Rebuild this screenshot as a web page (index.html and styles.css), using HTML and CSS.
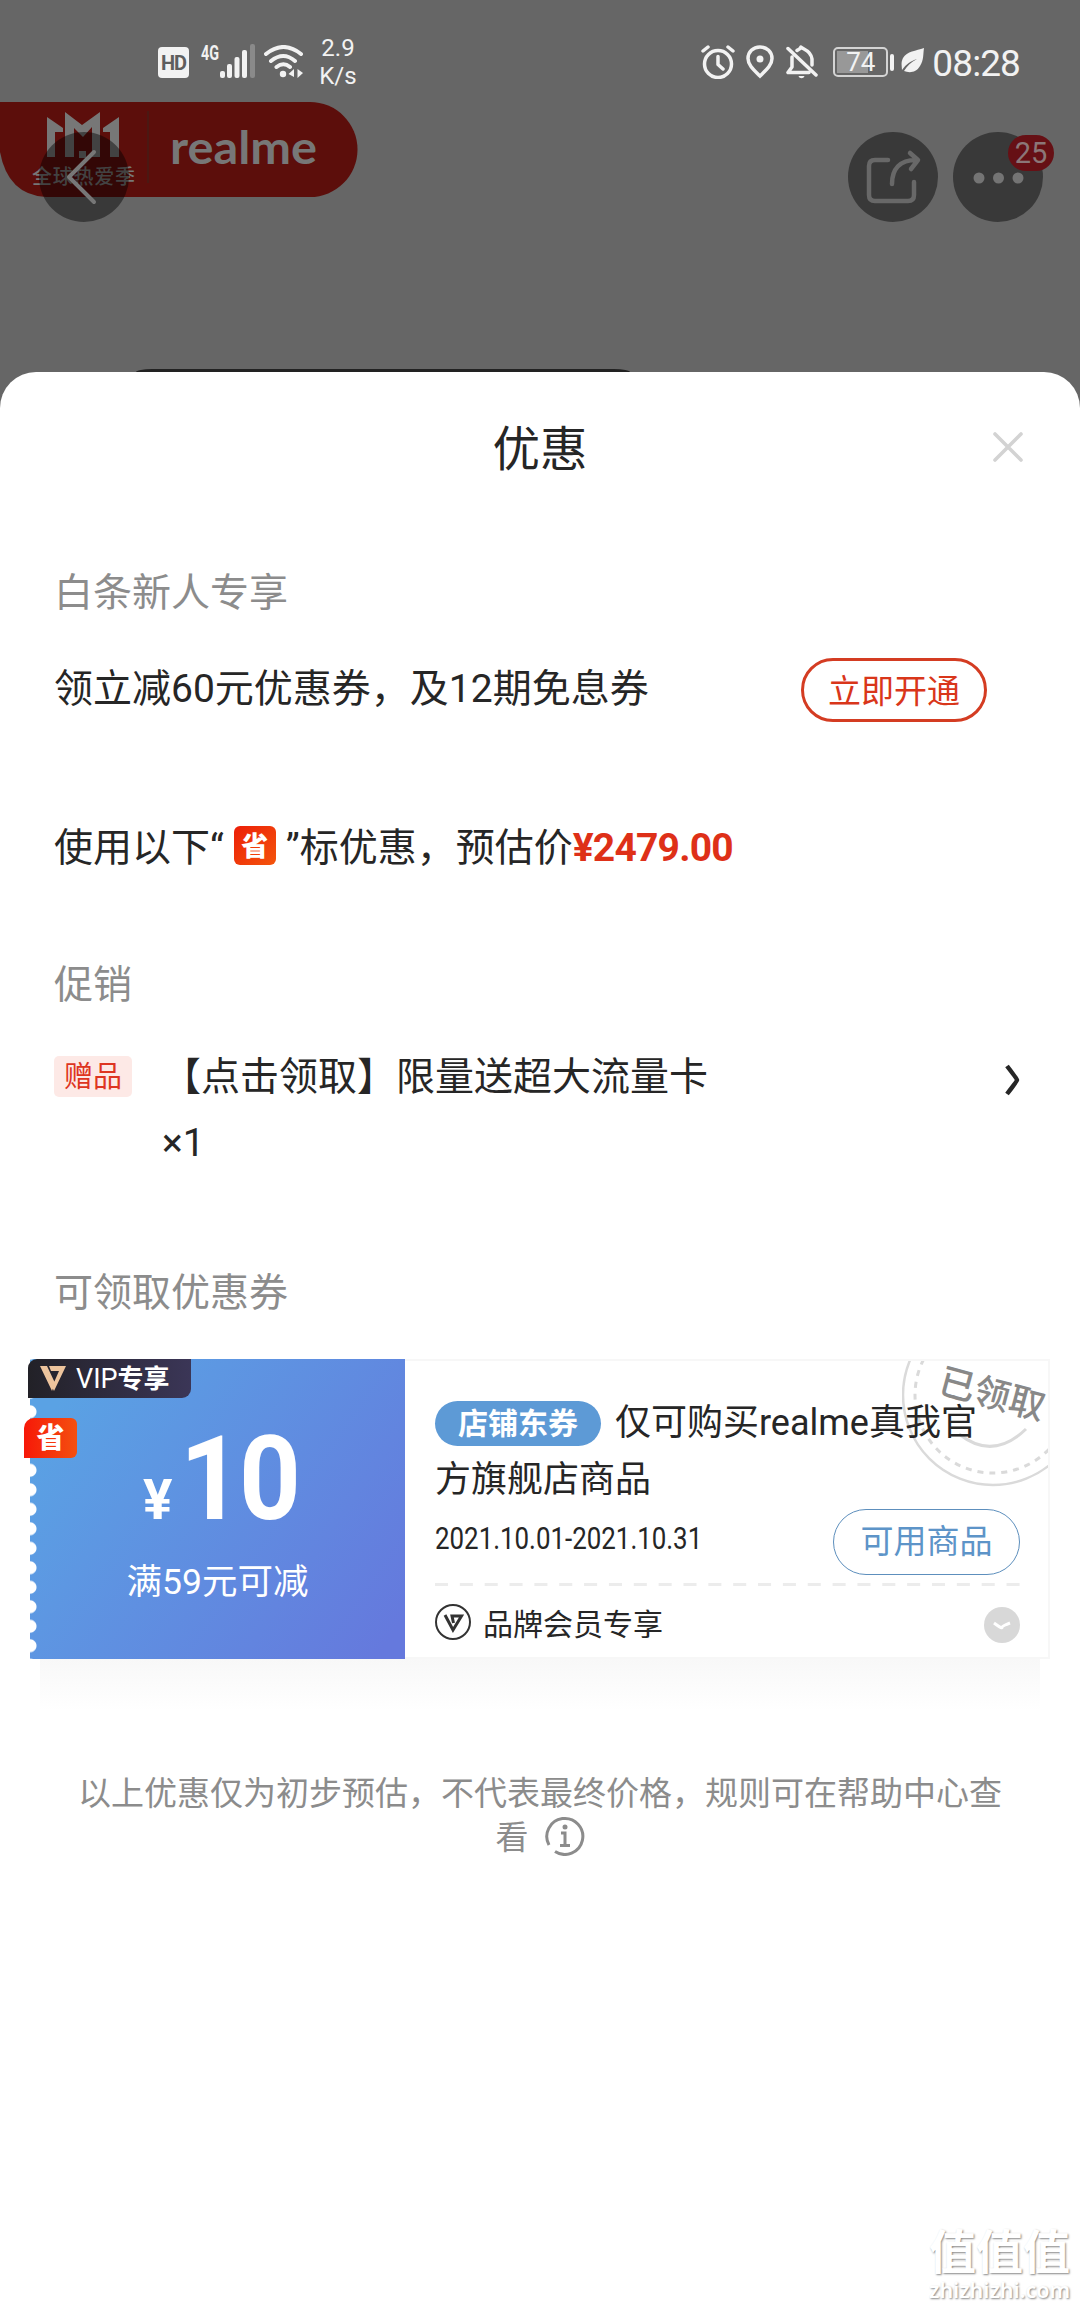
FILE: index.html
```html
<!DOCTYPE html>
<html lang="zh-CN">
<head>
<meta charset="utf-8">
<title>优惠</title>
<link rel="stylesheet" href="styles.css">
</head>
<body>
<div class="screen">
  <header class="top">
    <div class="status">
      <div class="status-left">
        <span class="hd">HD</span>
        <svg class="signal" width="54" height="34" viewBox="0 0 54 34">
          <text class="signal-gen" x="0" y="16" textLength="18" lengthAdjust="spacingAndGlyphs">4G</text>
          <g fill="#f2f2f2"><rect x="19" y="27" width="5" height="7" rx="2"/><rect x="26" y="20" width="5" height="14" rx="2"/><rect x="33.500" y="13" width="5" height="21" rx="2"/><rect x="41" y="6" width="5" height="28" rx="2"/></g>
          <rect x="49" y="0" width="5" height="34" rx="2" fill="#8a8a8a"/>
        </svg>
        <svg class="wifi" width="40" height="34" viewBox="0 0 40 34" fill="none" stroke="#f2f2f2" stroke-width="4" stroke-linecap="round">
          <path d="M2 9Q19.500-5 37 9M7 16Q19.500 6 31 16M12.500 22Q19.500 16.500 26 22"/>
          <circle cx="19" cy="29" r="3.200" fill="#f2f2f2" stroke="none"/>
          <path d="M24.500 29l5.500-5v8zM39 28l-5.500-4v9z" fill="#f2f2f2" stroke="none"/>
        </svg>
        <span class="speed">2.9<br>K/s</span>
      </div>
      <div class="status-right">
        <svg width="34" height="34" viewBox="0 0 34 34" fill="none" stroke="#f2f2f2" stroke-width="3.500" stroke-linecap="round" stroke-linejoin="round"><circle cx="17" cy="19" r="13.500"/><path d="M17 11.500v8l5 4.500M2 6l5-4M32 6l-5-4"/></svg>
        <svg class="pin" width="28" height="34" viewBox="0 0 28 34"><path d="M14 2C7 2 2 7 2 13.500 2 20 8 25 14 31c6-6 12-11 12-17.500C26 7 21 2 14 2z" fill="none" stroke="#f2f2f2" stroke-width="3.500"/><circle cx="14" cy="14" r="3.500" fill="#f2f2f2"/></svg>
        <svg class="bell" width="32" height="34" viewBox="0 0 32 34" fill="none" stroke="#f2f2f2" stroke-width="3.500" stroke-linecap="round" stroke-linejoin="round"><path d="M2 3.500L30 30M6 12v10l-4 5.500h21M11 5.500c2-1.500 3-1 4-3.500 2 2.500 10 3 11 12v6"/><path d="M12.500 31h6c-1 3-5 3-6 0z" fill="#f2f2f2" stroke="none"/></svg>
        <span class="battery">74</span><span class="battery-tip"></span>
        <svg class="leaf" width="24" height="26" viewBox="0 0 24 26"><path d="M23 1C15 4 6 4 2 11c-2.500 5-1 9-1 12 4-6 9-9 15-11-6 3-10 7-13 12 5 2 12 2 16-5 4-6 3-12 4-18z" fill="#f2f2f2"/></svg>
        <span class="clock">08:28</span>
      </div>
    </div>
    <div class="brand-banner">
      <svg width="358" height="96" viewBox="0 0 358 96">
        <path d="M0 0H310a47.500 47.500 0 0 1 0 95H46Q8 93 0 50z" fill="#5c0e0b"/>
        <path d="M148 9v72" stroke="#4b1813" stroke-width="2"/>
        <path fill="#777" d="M47 15L63 26v4h-8v25h-8zM65 10l17 13 18-13v45h-8V25L83 35 74 26v29h-9zM119 15L103 26v4h7v25h9zM79 49h7v7h-7z"/>
        <text class="banner-tag" x="32" y="82" textLength="103">全球热爱季</text>
        <text class="banner-name" x="170" y="62" textLength="147" lengthAdjust="spacingAndGlyphs">realme</text>
      </svg>
    </div>
    <nav class="nav">
      <span class="round"><svg width="90" height="90" viewBox="0 0 90 90" fill="none" stroke="#777" stroke-width="4" stroke-linecap="round" stroke-linejoin="round"><path d="M55 20L30 45l25 25"/></svg></span>
      <span class="round share"><svg width="90" height="90" viewBox="0 0 90 90" fill="none" stroke="#686868" stroke-width="4.500" stroke-linecap="round" stroke-linejoin="round"><path d="M40 28H27q-6 0-6 6v29q0 6 6 6h33q6 0 6-6V50M44 52C44 37 52 28 68 28M62 21l8 7-7 9"/></svg></span>
      <span class="round"><svg width="90" height="90" viewBox="0 0 90 90" fill="#747474"><circle cx="26" cy="46" r="5.500"/><circle cx="45.500" cy="46" r="5.500"/><circle cx="65" cy="46" r="5.500"/></svg><b class="count">25</b></span>
    </nav>
    <div class="product-edge"></div>
  </header>

  <main class="sheet">
    <div class="title-row"><h1 class="title">优惠</h1>
      <svg class="close" width="32" height="32" viewBox="0 0 32 32" stroke="#d3d3d3" stroke-width="3.600" stroke-linecap="round"><path d="M3 3l26 26M29 3L3 29"/></svg>
    </div>
    <h2 class="label label-credit">白条新人专享</h2>
    <div class="credit-row"><span class="credit-text">领立减60元优惠券，及12期免息券</span><span class="open-btn">立即开通</span></div>
    <p class="estimate">使用以下“<i class="save">省</i>”标优惠，预估价<b class="price">¥2479.00</b></p>
    <h2 class="label label-promo">促销</h2>
    <div class="gift-row">
      <span class="gift-tag">赠品</span>
      <span class="gift-text">【点击领取】限量送超大流量卡<br>×1</span>
      <svg class="arrow" width="20" height="34" viewBox="0 0 20 34" fill="none" stroke="#262626" stroke-width="4.500"><path d="M5 3q10 13 10 14T5 31"/></svg>
    </div>
    <h2 class="label label-coupon">可领取优惠券</h2>
    <section class="coupon">
      <div class="coupon-left">
        <div class="amount"><span class="yen">¥</span><span class="ten">10</span></div>
        <div class="limit">满59元可减</div>
      </div>
      <div class="coupon-right">
        <div class="stamp">
          <svg width="148" height="130" viewBox="0 0 148 130" fill="none" stroke="#dadada">
            <circle cx="91" cy="36" r="90" stroke-width="2.500"/>
            <circle cx="91" cy="36" r="78" stroke-width="3" stroke-dasharray="6 6"/>
            <path d="M57 75Q91 102 124 70" stroke-width="3"/>
            <text class="stamp-text" x="90" y="48" text-anchor="middle" transform="rotate(15 91 36)">已领取</text>
          </svg>
        </div>
        <p class="scope"><span class="shop-tag">店铺东券</span>仅可购买realme真我官方旗舰店商品</p>
        <div class="date-row"><span class="date">2021.10.01-2021.10.31</span><span class="use-btn">可用商品</span></div>
        <svg class="dash" width="586" height="3" viewBox="0 0 586 3"><path d="M0 1.500H586" stroke="#ececec" stroke-width="3" stroke-dasharray="13 11.850"/></svg>
        <div class="member">
          <svg width="36" height="36" viewBox="0 0 36 36" fill="none" stroke="#333"><circle cx="18" cy="18" r="17" stroke-width="2"/><path d="M10 11l8 15 8.500-14H17l1.500 7" stroke-width="3"/></svg>
          <span class="member-text">品牌会员专享</span>
          <svg class="expand" width="36" height="36" viewBox="0 0 36 36"><circle cx="18" cy="18" r="18" fill="#d8d8d8"/><path d="M10 16q8 6 8 4.500T26 16" fill="none" stroke="#fff" stroke-width="3"/></svg>
        </div>
      </div>
      <div class="vip">
        <svg width="26" height="26" viewBox="0 0 26 26"><path d="M0 0h7l8 17-3 8zM9 0h17L14 25l-2-4 7-16h-8z" fill="#edc49d"/></svg>
        <span>VIP<b>专享</b></span>
      </div>
      <span class="save-flag">省</span>
    </section>
    <div class="coupon-shadow"></div>
    <p class="note">以上优惠仅为初步预估，不代表最终价格，规则可在帮助中心查<br>看<svg class="info" width="40" height="40" viewBox="0 0 40 40" fill="none" stroke="#8c8c8c" stroke-width="3"><path d="M4 29A18 18 0 1 1 10 35.500"/><path d="M16 17h4v12M15 29.500h10"/><circle cx="20" cy="11" r="2.500" fill="#8c8c8c" stroke="none"/></svg></p>
    <footer class="mark"><span class="mark-name">值值值</span><span class="mark-url">zhizhizhi.com</span></footer>
  </main>
</div>
</body>
</html>
```

FILE: styles.css
```css
* { box-sizing: border-box; }
body { margin: 0; background: #666; font-family: Roboto, "Noto Sans CJK SC", sans-serif; color: #262626; }
h1, h2, p { margin: 0; font-weight: 400; }
svg { display: block; flex: none; }
.screen { width: 1080px; height: 2310px; display: flex; flex-direction: column; overflow: hidden; }

.top { position: relative; height: 372px; flex: none; background: #666; color: #f2f2f2; }
.status { height: 124px; padding: 0 60px 0 158px; display: flex; justify-content: space-between; align-items: center; }
.status-left, .status-right { display: flex; align-items: center; }
.hd { width: 31px; height: 31px; border-radius: 4px; background: #f2f2f2; color: #5e5e5e; font-weight: 700; font-size: 20px; letter-spacing: -1px; line-height: 32px; text-align: center; }
.signal { margin: -2px 0 0 12px; overflow: visible; }
.signal-gen { font: 700 20px Roboto, sans-serif; fill: #f2f2f2; }
.wifi { margin-left: 9px; }
.speed { margin-left: 15px; width: 38px; font-size: 24px; line-height: 28px; text-align: center; }
.pin { margin-left: 11px; }
.bell { margin-left: 12px; }
.battery { margin-left: 15px; width: 55px; height: 30px; border: 2px solid #d4d4d4; border-radius: 5px; background: linear-gradient(90deg, #989898 66%, #666 66%) 2px 2px / 47px 22px no-repeat; font-size: 26px; line-height: 27px; text-align: center; }
.battery-tip { width: 4px; height: 17px; margin-left: 2px; border-radius: 2px; background: #f2f2f2; }
.leaf { margin: -4px 0 0 7px; }
.clock { margin-left: 7px; font-size: 37px; letter-spacing: -.9px; line-height: 40px; padding-top: 3px; }

.brand-banner { position: absolute; left: 0; top: 102px; }
.banner-tag { font: 500 20px "Noto Sans CJK SC", sans-serif; fill: #777; }
.banner-name { font: 700 45px Lato, sans-serif; fill: #777; }
.nav { position: relative; display: flex; margin-top: 8px; padding: 0 37px 0 39px; }
.round { position: relative; width: 90px; height: 90px; border-radius: 50%; background: rgba(0, 0, 0, .44); }
.share { margin: 0 15px 0 auto; }
.count { position: absolute; left: 55px; top: 3px; width: 46px; height: 36px; border-radius: 18px; background: #661015; color: #8b7778; font-weight: 400; font-size: 29px; line-height: 36px; text-align: center; }
.product-edge { position: absolute; left: 136px; bottom: 0; width: 494px; height: 3px; border-radius: 16px 16px 0 0 / 3px 3px 0 0; background: #222; }

.sheet { flex: 1; display: flex; flex-direction: column; background: #fff; border-radius: 36px 36px 0 0; }
.title-row { position: relative; height: 154px; display: flex; justify-content: center; align-items: center; }
.title { font-size: 47.5px; line-height: 60px; padding-top: 1px; }
.close { position: absolute; right: 56px; top: 59px; }
.label { padding-left: 54px; font-size: 39px; line-height: 60px; height: 60px; color: #8c8c8c; }
.label-credit { margin-top: 37px; }
.credit-row { margin-top: 31px; height: 72px; padding: 0 93px 0 54px; display: flex; justify-content: space-between; align-items: center; font-size: 39px; }
.credit-text { line-height: 60px; padding-bottom: 2px; }
.open-btn { width: 186px; height: 64px; border: 3px solid #d43c22; border-radius: 32px; color: #d9361a; font-size: 33px; line-height: 61px; text-align: center; }
.estimate { margin-top: 92px; height: 60px; padding-left: 54px; display: flex; align-items: center; font-size: 39px; line-height: 60px; }
.save { width: 42px; height: 39px; margin: -5px 10px 0; border-radius: 6px; background: linear-gradient(135deg, #ec1e08, #f4550c); color: #fff; font: 900 27px/38px "Noto Sans CJK SC", sans-serif; text-align: center; }
.price { color: #de3018; font-weight: 700; letter-spacing: -.8px; }
.label-promo { margin-top: 77px; }
.gift-row { margin-top: 29px; padding: 0 58px 0 54px; height: 132px; display: flex; align-items: flex-start; }
.gift-tag { width: 78px; height: 41px; margin-top: 12px; border-radius: 5px; background: #fde9e6; color: #de3521; font-size: 29px; line-height: 42px; text-align: center; }
.gift-text { margin-left: 30px; font-size: 39px; line-height: 66px; }
.arrow { margin: 19px 0 0 auto; }
.label-coupon { margin-top: 87px; }

.coupon { position: relative; margin: 36px 30px 0; height: 300px; display: flex; flex: none; }
.coupon-left { width: 375px; background: radial-gradient(circle at 0 50%, #fff 6px, transparent 7px) 0 4px / 8px 19.500px repeat-y, linear-gradient(125deg, #5aa2e4 10%, #6579dd 95%); color: #fff; }
.amount { display: flex; align-items: baseline; margin: 63px 0 0 113px; height: 114px; }
.yen { font-size: 55px; font-weight: 700; width: 37px; }
.ten { font-size: 116px; line-height: 114px; font-weight: 700; letter-spacing: -3px; transform: scaleX(.93); transform-origin: 0 50%; }
.limit { margin-top: 16px; font-size: 35.5px; line-height: 60px; text-align: center; }
.coupon-right { position: relative; width: 645px; padding: 34px 28px 0 30px; border: 2px solid #f7f7f7; border-left: 0; overflow: hidden; }
.stamp { position: absolute; right: -2px; top: -2px; }
.stamp-text { font: 500 36px "Noto Sans CJK SC", sans-serif; fill: #888; stroke: none; }
.scope { position: relative; font-size: 36px; line-height: 57px; height: 116px; padding-right: 32px; }
.shop-tag { display: inline-block; vertical-align: 1px; width: 166px; height: 45px; margin-right: 14px; border-radius: 23px; background: #5d9ad6; color: #fff; font-weight: 700; font-size: 30px; line-height: 46px; text-align: center; }
.date-row { height: 66px; margin-top: -2px; display: flex; align-items: center; justify-content: space-between; }
.date { width: 264px; font-size: 31px; line-height: 36px; padding-bottom: 6px; white-space: nowrap; transform: scaleX(.835); transform-origin: 0 50%; }
.use-btn { width: 187px; height: 66px; border: 1px solid #5d8fbd; border-radius: 33px; color: #5d94c8; font-size: 33px; line-height: 64px; text-align: center; }
.dash { margin-top: 8px; }
.member { height: 72px; display: flex; align-items: center; font-size: 30px; }
.member-text { margin: 0 auto 0 12px; }
.expand { margin-top: 5px; }
.vip { position: absolute; left: -2px; top: 0; width: 163px; height: 39px; padding-left: 12px; display: flex; align-items: center; gap: 10px; border-radius: 9px 0 9px 0; background: linear-gradient(90deg, #222127, #3b3657); color: #fff; font-size: 27px; line-height: 38px; }
.vip b { font-weight: 700; font-size: 26px; }
.save-flag { position: absolute; left: -6px; top: 59px; width: 53px; height: 40px; border-radius: 10px 6px 6px 0; background: linear-gradient(90deg, #f71808, #f4500f); color: #fff; font: 900 28px/37px "Noto Sans CJK SC", sans-serif; text-align: center; }
.coupon-shadow { height: 52px; margin: 0 40px; background: linear-gradient(#f8f8f8, #fff); }
.note { margin-top: 61px; height: 88px; color: #8c8c8c; font-size: 33px; line-height: 44px; text-align: center; }
.info { display: inline-block; vertical-align: -8px; margin: -10px 0 -4px 16px; position: relative; top: -5px; }
.mark { margin-top: auto; height: 86px; padding-left: 929px; display: flex; flex-direction: column; gap: 4px; color: #fff; text-shadow: 1px 1px 2px #888; }
.mark-name { font: 700 47px/50px "Noto Sans CJK SC", sans-serif; }
.mark-url { font: 600 21.500px/24px "Noto Sans", sans-serif; }
```
